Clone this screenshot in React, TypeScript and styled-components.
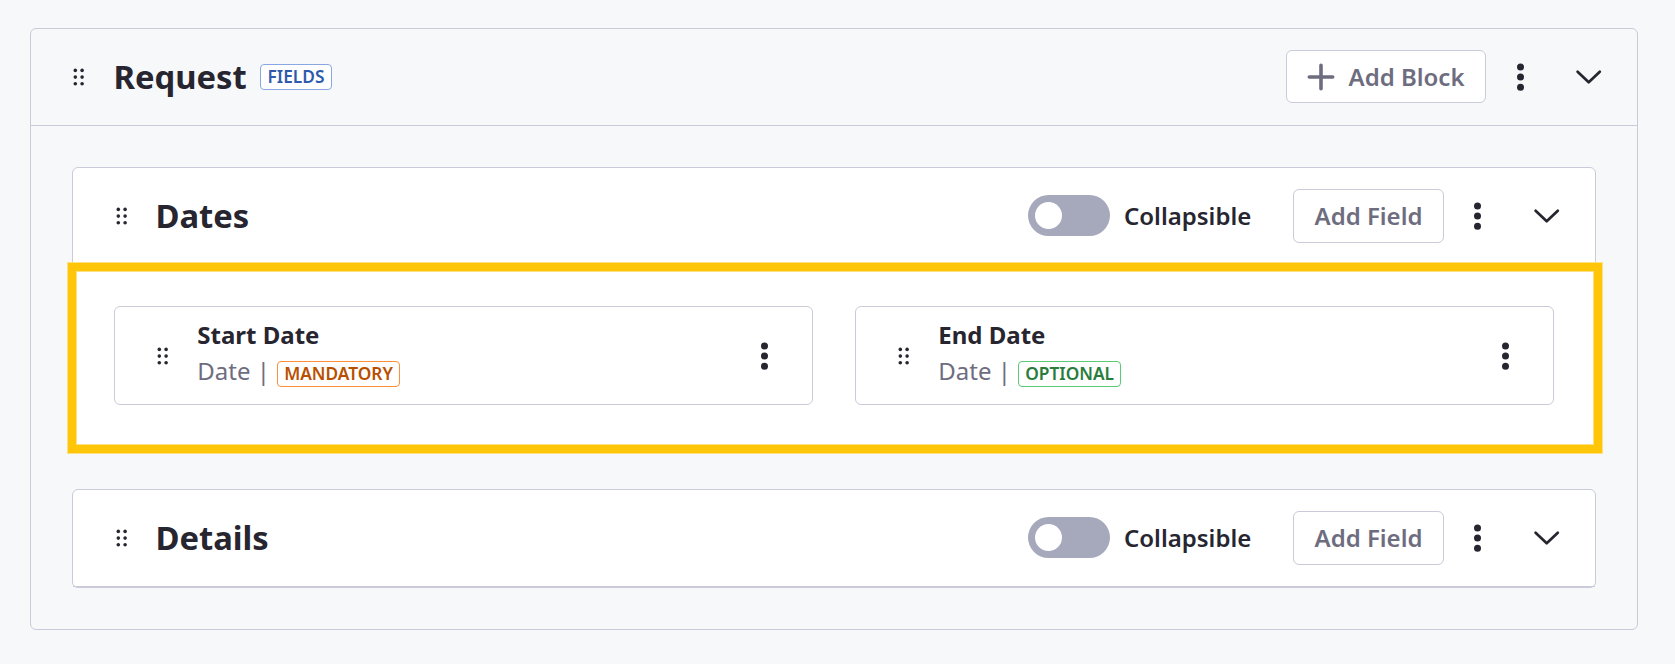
import React from 'react';
import styled, { createGlobalStyle } from 'styled-components';

const Global = createGlobalStyle`
  *, *::before, *::after { box-sizing: border-box; }
  html, body { margin: 0; background: #f7f8fa; }
  body { font-family: "Noto Sans", sans-serif; color: #272630; overflow: hidden; }
  svg { flex: none; }
`;

const Page = styled.main`
  height: 664px;
  padding: 28px 37px 34px 30px;
`;

const Panel = styled.section`
  height: 602px;
  border: 1px solid #cbcad9;
  border-radius: 6px;
`;

const Header = styled.header<{ $outer?: boolean }>`
  display: flex;
  align-items: center;
  height: 97px;
  padding: 0 28px 1px ${(p) => (p.$outer ? 40 : 41)}px;
  border-bottom: 1px solid #cbcad9;
`;

const Title = styled.h2<{ $outer?: boolean }>`
  margin: 0 0 0 ${(p) => (p.$outer ? 26.4 : 25.4)}px;
  font-size: 32.77px;
  line-height: 42px;
  font-weight: 700;
`;

const Spacer = styled.div`
  flex: 1;
`;

const tones = {
  blue: ['#2e5aac', '#89a7e0'],
  orange: ['#b95000', '#ff8f39'],
  green: ['#287d3c', '#5aca75'],
};

const Tag = styled.span<{ $tone: keyof typeof tones }>`
  display: inline-flex;
  align-items: center;
  justify-content: center;
  height: 26px;
  margin: 7px 0 0 0.8px;
  padding: 0 6.2px;
  border: 1px solid ${(p) => tones[p.$tone][1]};
  border-radius: 4px;
  background: #fff;
  color: ${(p) => tones[p.$tone][0]};
  font-size: 17.3px;
  line-height: 24px;
  font-weight: 600;
`;

const TitleTag = styled(Tag)`
  margin: 1px 0 0 13.6px;
`;

const Button = styled.button`
  display: flex;
  align-items: center;
  justify-content: center;
  gap: 14px;
  width: 200px;
  height: 53px;
  padding: 0 1px 0 0;
  border: 1px solid #cbcad9;
  border-radius: 6px;
  background: #fff;
  color: #6e6d80;
  font: 600 24px/33px "Noto Sans", sans-serif;
`;

const FieldButton = styled(Button)`
  width: 151px;
  height: 54px;
  margin-top: 1px;
  padding: 0;
  line-height: 32px;
`;

const Actions = styled.div<{ $outer?: boolean }>`
  display: flex;
  align-items: center;
  gap: ${(p) => (p.$outer ? 44 : 45)}px;
  margin-left: ${(p) => (p.$outer ? 31 : 30)}px;
`;

const Body = styled.div`
  display: flex;
  flex-direction: column;
  gap: 41px;
  padding: 41px 41px 0;
`;

const Card = styled.section`
  position: relative;
  border: 1px solid #cbcad9;
  border-radius: 6px;
  background: #fff;
`;

const Highlight = styled.div`
  position: absolute;
  inset: 95px -7px -6px -5px;
  border: 8px solid #ffc508;
  outline: 1px solid #ffe182;
  box-shadow: inset 0 0 0 1px #ffe182;
`;

const Fields = styled.div`
  display: grid;
  grid-template-columns: 1fr 1fr;
  gap: 42px;
  padding: 41px 41px 42px;
`;

const Field = styled.div`
  display: flex;
  align-items: center;
  height: 99px;
  padding: 0 44.4px 0 40px;
  border: 1px solid #cbcad9;
  border-radius: 6px;
`;

const FieldText = styled.div`
  display: flex;
  flex-direction: column;
  margin: -6px 0 0 26.3px;
`;

const FieldName = styled.div`
  font-size: 24px;
  line-height: 36px;
  font-weight: 700;
`;

const FieldMeta = styled.div`
  display: flex;
  align-items: center;
  height: 36px;
  color: #6e6d80;
  font-size: 24px;
  white-space: pre;
`;

const Toggle = styled.span`
  display: flex;
  align-items: center;
  width: 82px;
  height: 41px;
  padding-left: 7px;
  border-radius: 21px;
  background: #a6a8bc;
`;

const Knob = styled.span`
  width: 27px;
  height: 27px;
  border-radius: 50%;
  background: #fff;
`;

const ToggleLabel = styled.label`
  width: 127px;
  margin: 0 42px 0 14px;
  font-size: 24px;
  line-height: 33px;
  font-weight: 600;
  white-space: nowrap;
`;

const Grip = () => (
  <svg width="16" height="20" viewBox="0 0 16 20" fill="#272630">
    {[3.4, 10.1, 16.8].map((y) =>
      [4.3, 11.1].map((x) => <circle key={`${x}-${y}`} cx={x} cy={y} r="1.8" />),
    )}
  </svg>
);

const Dots = () => (
  <svg width="7" height="28" viewBox="0 0 7 28" fill="#272630">
    {[3.9, 14.1, 24.3].map((y) => (
      <circle key={y} cx="3.5" cy={y} r="3.5" />
    ))}
  </svg>
);

const Chevron = () => (
  <svg width="41" height="28" viewBox="0 0 41 28" fill="none" stroke="#272630" strokeWidth="2.7" strokeLinecap="round" strokeLinejoin="round">
    <path d="M9.6 8.7 20.7 19.3 31.8 8.7" />
  </svg>
);

const Plus = () => (
  <svg width="28" height="28" viewBox="0 0 28 28" fill="none" stroke="#6e6d80" strokeWidth="3.6" strokeLinecap="round">
    <path d="M14 2.3v23.4M2.3 14h23.4" />
  </svg>
);

const RowActions = ({ outer }: { outer?: boolean }) => (
  <Actions $outer={outer}>
    <Dots />
    <Chevron />
  </Actions>
);

const BlockHeader = ({ title }: { title: string }) => (
  <Header>
    <Grip />
    <Title>{title}</Title>
    <Spacer />
    <Toggle>
      <Knob />
    </Toggle>
    <ToggleLabel>Collapsible</ToggleLabel>
    <FieldButton>Add Field</FieldButton>
    <RowActions />
  </Header>
);

const FieldCard = ({ name, tag, tone }: { name: string; tag: string; tone: keyof typeof tones }) => (
  <Field>
    <Grip />
    <FieldText>
      <FieldName>{name}</FieldName>
      <FieldMeta>
        {'Date | '}
        <Tag $tone={tone}>{tag}</Tag>
      </FieldMeta>
    </FieldText>
    <Spacer />
    <Dots />
  </Field>
);

export default function App() {
  return (
    <Page>
      <Global />
      <Panel>
        <Header $outer>
          <Grip />
          <Title $outer>Request</Title>
          <TitleTag $tone="blue">FIELDS</TitleTag>
          <Spacer />
          <Button>
            <Plus />
            Add Block
          </Button>
          <RowActions outer />
        </Header>
        <Body>
          <Card>
            <BlockHeader title="Dates" />
            <Fields>
              <FieldCard name="Start Date" tag="MANDATORY" tone="orange" />
              <FieldCard name="End Date" tag="OPTIONAL" tone="green" />
            </Fields>
            <Highlight />
          </Card>
          <Card>
            <BlockHeader title="Details" />
          </Card>
        </Body>
      </Panel>
    </Page>
  );
}
